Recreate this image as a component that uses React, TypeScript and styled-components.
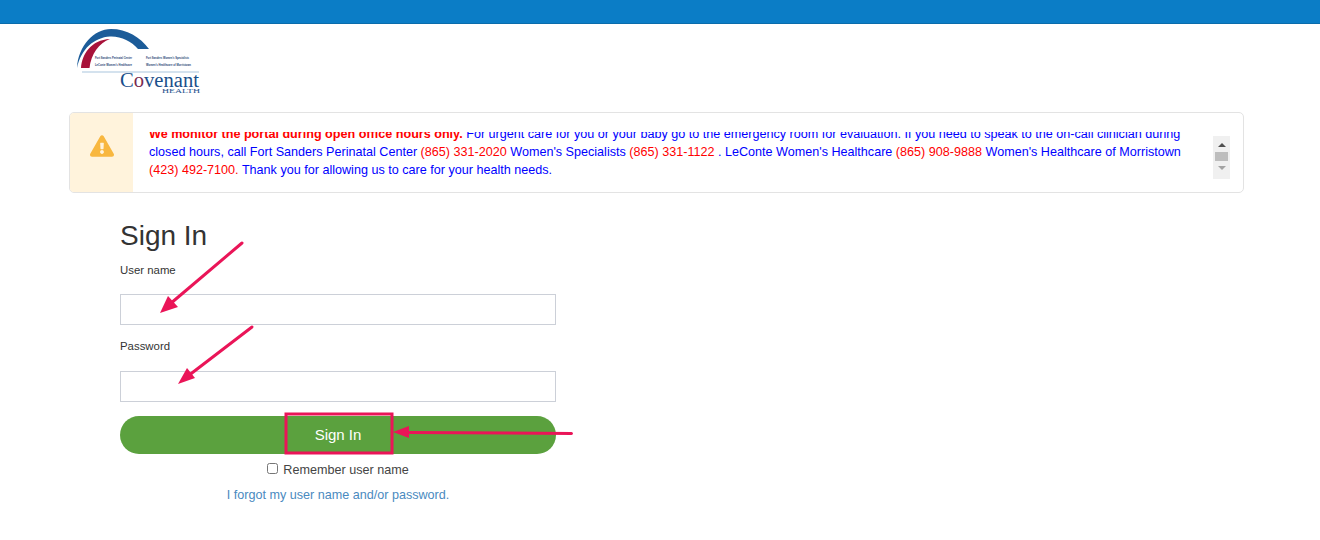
import React from "react";
import styled, { createGlobalStyle } from "styled-components";
import { FaExclamationTriangle } from "react-icons/fa";

const GlobalStyle = createGlobalStyle`
  html, body {
    margin: 0;
    padding: 0;
    background: #fff;
    font-family: "Liberation Sans", Arial, sans-serif;
    color: #333;
  }
`;

const PINK = "#ea1558";

const Page = styled.div`
  position: relative;
  width: 1320px;
  height: 540px;
  overflow: hidden;
`;

const TopBar = styled.div`
  height: 23px;
  background: #0b7dc6;
  border-bottom: 1px solid #0a6cab;
`;

const LogoRow = styled.div`
  height: 88px;
  padding: 4px 0 0 77px;
  box-sizing: border-box;
`;

const Alert = styled.div`
  display: flex;
  height: 81px;
  margin: 0 76px 0 69px;
  box-sizing: border-box;
  border: 1px solid #e3e3e3;
  border-radius: 5px;
  overflow: hidden;
`;

const AlertIcon = styled.div`
  flex: 0 0 63px;
  display: flex;
  align-items: center;
  justify-content: center;
  box-sizing: border-box;
  padding-bottom: 14px;
  background: #fff3dc;
  color: #f8b73f;
  font-size: 24px;
`;

const AlertBody = styled.div`
  flex: 1;
  display: flex;
  align-items: flex-start;
  padding: 19px 13px 0 16px;
`;

const ScrollClip = styled.div`
  width: 1040px;
  height: 47px;
  overflow: hidden;
  font-size: 12.6px;
  line-height: 18px;
  color: #0000ff;
`;

const ScrollInner = styled.div`
  margin-top: -7px;
`;

const Red = styled.span<{ $bold?: boolean }>`
  color: #ff0000;
  font-weight: ${(p) => (p.$bold ? 700 : 400)};
`;

const ScrollBar = styled.div`
  margin: 4px 0 0 auto;
  width: 17px;
  height: 43px;
  background: #f0f0f0;
  display: flex;
  flex-direction: column;
  align-items: center;
`;

const ScrollArrow = styled.div<{ $down?: boolean }>`
  width: 0;
  height: 0;
  margin: ${(p) => (p.$down ? "5px 0 0" : "7px 0 5px")};
  border-left: 4px solid transparent;
  border-right: 4px solid transparent;
  ${(p) =>
    p.$down
      ? "border-top: 4px solid #a3a3a3;"
      : "border-bottom: 4px solid #505050;"}
`;

const ScrollThumb = styled.div`
  width: 13px;
  height: 9px;
  background: #bdbdbd;
`;

const Form = styled.form`
  width: 436px;
  margin: 0 0 0 120px;
`;

const Title = styled.h1`
  margin: 25px 0 0;
  font-size: 28px;
  line-height: 36px;
  font-weight: 400;
  color: #333;
`;

const Label = styled.label<{ $top: number }>`
  display: block;
  margin-top: ${(p) => p.$top}px;
  font-size: 11.4px;
  line-height: 14px;
  color: #333;
`;

const Input = styled.input<{ $top: number }>`
  display: block;
  width: 100%;
  height: 31px;
  margin-top: ${(p) => p.$top}px;
  padding: 0 8px;
  box-sizing: border-box;
  border: 1px solid #ccd0d8;
  border-radius: 0;
  background: #fff;
`;

const SubmitButton = styled.button`
  display: block;
  width: 100%;
  height: 38px;
  margin-top: 14px;
  padding: 0 0 2px;
  border: 0;
  border-radius: 19px;
  background: #5ba13e;
  color: #fff;
  font-family: inherit;
  font-size: 15px;
`;

const RememberRow = styled.div`
  display: flex;
  align-items: center;
  justify-content: center;
  margin-top: 7px;
  height: 18px;
  font-size: 12.6px;
  color: #444;
`;

const Checkbox = styled.input`
  width: 11px;
  height: 11px;
  margin: 0 5px 3px 0;
`;

const ForgotLink = styled.a`
  display: block;
  margin-top: 7px;
  text-align: center;
  font-size: 12.6px;
  line-height: 18px;
  color: #4a8ac0;
  text-decoration: none;
`;

const Overlay = styled.svg`
  position: absolute;
  left: 0;
  top: 0;
  pointer-events: none;
`;

const Logo = () => (
  <svg width="124" height="66" viewBox="0 0 124 66">
    <path
      d="M0 40 C1 18 17 1 34 1 C50 1 63 9 72 21 L61 21 C54 13 44 8 33 8.5 C17 9.5 4 21 0 40Z"
      fill="#1c5c99"
    />
    <path d="M4 40 C5 26 14 12 33 11 C22 15 14 26 12.5 40Z" fill="#a8123a" />
    <g
      fontFamily="'Liberation Sans', sans-serif"
      fontSize="4"
      fontWeight="700"
      fill="#2a4676"
    >
      <text x="18" y="30.5" textLength="37" lengthAdjust="spacingAndGlyphs">
        Fort Sanders Perinatal Center
      </text>
      <text x="18" y="37.5" textLength="37" lengthAdjust="spacingAndGlyphs">
        LeConte Women's Healthcare
      </text>
      <text x="69" y="30.5" textLength="43" lengthAdjust="spacingAndGlyphs">
        Fort Sanders Women's Specialists
      </text>
      <text x="69" y="37.5" textLength="45" lengthAdjust="spacingAndGlyphs">
        Women's Healthcare of Morristown
      </text>
    </g>
    <rect x="5" y="43.5" width="117" height="1" fill="#a9c6de" />
    <g fontFamily="'Liberation Serif', serif" fill="#1a4f8b">
      <text x="43" y="59" fontSize="20" textLength="79" lengthAdjust="spacingAndGlyphs">
        C<tspan fill="#7a2a50">o</tspan>venant
      </text>
      <text x="85" y="64.5" fontSize="6.5" textLength="38" lengthAdjust="spacingAndGlyphs">
        HEALTH
      </text>
    </g>
  </svg>
);

const Arrows = () => (
  <Overlay width="1320" height="540" viewBox="0 0 1320 540">
    <g stroke={PINK} strokeWidth="3" strokeLinecap="round" fill="none">
      <path d="M242 243 L170 304" />
      <path d="M252 327 L188 376" />
      <path d="M571.5 433.5 L408 432.5" />
      <rect x="286" y="414" width="106" height="39" />
    </g>
    <g fill={PINK}>
      <path d="M160 313 L168 296 L178 307Z" />
      <path d="M178 384 L187 368 L195 378Z" />
      <path d="M393 432 L409 426 L409 438Z" />
    </g>
  </Overlay>
);

export default function App() {
  return (
    <Page>
      <GlobalStyle />
      <TopBar />
      <LogoRow>
        <Logo />
      </LogoRow>
      <Alert>
        <AlertIcon>
          <FaExclamationTriangle />
        </AlertIcon>
        <AlertBody>
          <ScrollClip>
            <ScrollInner>
              <Red $bold>We monitor the portal during open office hours only.</Red>{" "}
              For urgent care for you or your baby go to the emergency room for
              evaluation. If you need to speak to the on-call clinician during
              closed hours, call Fort Sanders Perinatal Center{" "}
              <Red>(865) 331-2020</Red> Women's Specialists{" "}
              <Red>(865) 331-1122</Red> . LeConte Women's Healthcare{" "}
              <Red>(865) 908-9888</Red> Women's Healthcare of Morristown{" "}
              <Red>(423) 492-7100.</Red> Thank you for allowing us to care for
              your health needs.
            </ScrollInner>
          </ScrollClip>
          <ScrollBar>
            <ScrollArrow />
            <ScrollThumb />
            <ScrollArrow $down />
          </ScrollBar>
        </AlertBody>
      </Alert>
      <Form onSubmit={(e) => e.preventDefault()}>
        <Title>Sign In</Title>
        <Label htmlFor="username" $top={9}>
          User name
        </Label>
        <Input id="username" type="text" $top={17} />
        <Label htmlFor="password" $top={14}>
          Password
        </Label>
        <Input id="password" type="password" $top={18} />
        <SubmitButton type="submit">Sign In</SubmitButton>
        <RememberRow>
          <Checkbox type="checkbox" />
          Remember user name
        </RememberRow>
        <ForgotLink href="#">I forgot my user name and/or password.</ForgotLink>
      </Form>
      <Arrows />
    </Page>
  );
}
